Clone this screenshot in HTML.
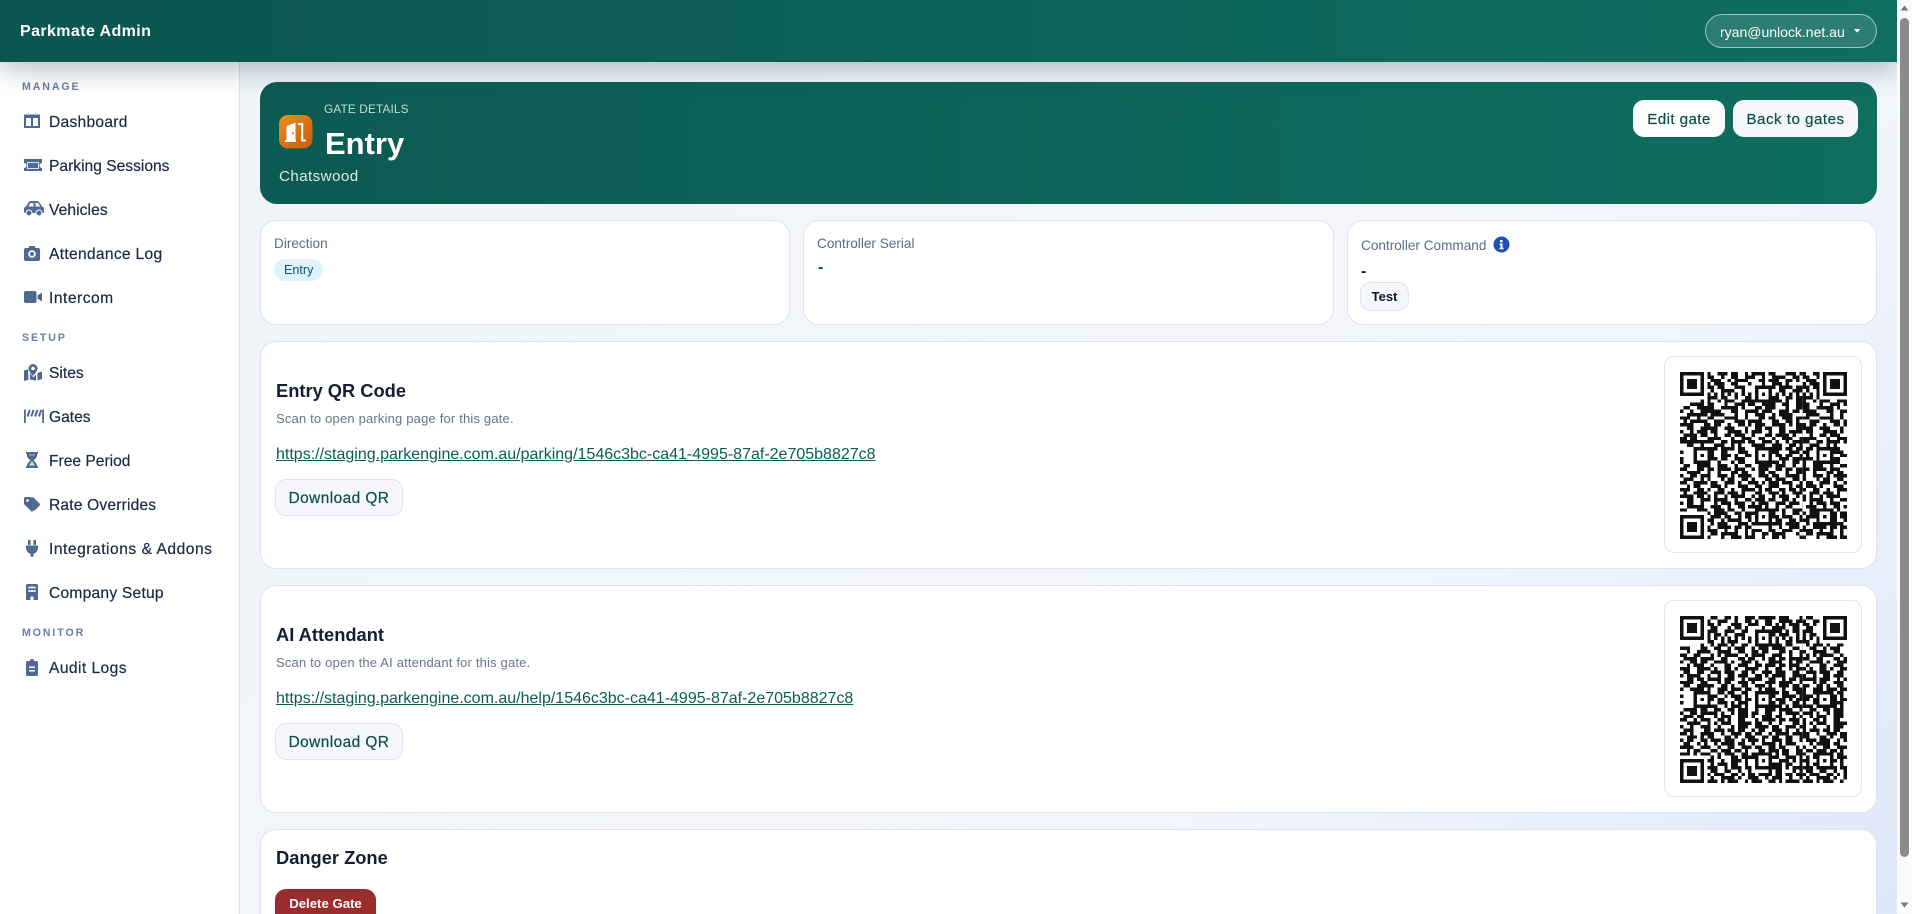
<!DOCTYPE html>
<html lang="en"><head><meta charset="utf-8"><title>Parkmate Admin</title>
<style>
html,body{margin:0;padding:0;width:1912px;height:914px;overflow:hidden}
body{position:relative;font-family:"Liberation Sans",Arial,sans-serif;background:linear-gradient(135deg,#edf4f6 0%,#f4f6fb 55%,#f2f5fc 70%,#dde8fb 100%);color:#1f2a44}
.t{position:absolute;white-space:nowrap;line-height:20px;height:20px}
.side{position:absolute;left:0;top:62px;width:239px;height:852px;background:#fff;border-right:1px solid #dbe0ee}
.head{position:absolute;left:0;top:0;width:1897px;height:62px;background:linear-gradient(90deg,#0a5550 0%,#0f6e60 100%);box-shadow:0 8px 26px rgba(30,70,90,.33);z-index:3}
.nav{left:49px;font-size:15.6px;color:#1d2943;-webkit-text-stroke:.2px #1d2943}
.sec{left:22px;font-size:10.6px;font-weight:700;letter-spacing:1.9px;color:#6b7ca5}
.card{position:absolute;background:#fff;border:1px solid #dfe3f1;border-radius:16px;box-sizing:border-box}
.hero{position:absolute;left:260px;top:82px;width:1617px;height:122px;border-radius:17px;background:linear-gradient(90deg,#0b5a53 0%,#0f6e60 100%)}
.btn{position:absolute;box-sizing:border-box;text-align:center;white-space:nowrap;border-radius:11px}
.dl{left:275px;width:128px;height:37px;line-height:37px;background:#f5f7fc;border:1px solid #dfe3f1;color:#0b4f4a;font-size:15.4px;letter-spacing:.45px;-webkit-text-stroke:.2px #0b4f4a}
.lab{font-size:13.6px;color:#5f6b85}
.h3{font-size:18.3px;font-weight:700;color:#161d33;left:276px}
.sub{font-size:13px;letter-spacing:.18px;color:#68738b;left:276px}
.lnk{font-size:16px;color:#0b5d53;text-decoration:underline;left:276px}
.qrbox{position:absolute;left:1664px;width:198px;height:197px;border:1px solid #dfe5f3;border-radius:10px;box-sizing:border-box;background:#fff}
.qr{position:absolute;left:1680px;width:167px;height:167px}
</style></head><body>

<div class="side"></div>
<div class="head"></div>
<div class="t" style="left:20px;top:22px;font-size:16px;font-weight:700;color:#fff;letter-spacing:.4px;z-index:4">Parkmate Admin</div>
<div style="position:absolute;left:1705px;top:14px;width:172px;height:34px;box-sizing:border-box;border:1px solid rgba(255,255,255,.55);border-radius:17px;background:rgba(255,255,255,.12);z-index:4"></div>
<div class="t" style="left:1720px;top:22px;font-size:14px;color:#fff;z-index:4">ryan@unlock.net.au</div>
<svg style="position:absolute;left:1854px;top:29px;z-index:4" width="7" height="5"><path d="M0 0h6.4L3.2 3.6z" fill="#fff"/></svg>

<div class="t sec" style="top:76.5px">MANAGE</div>
<div class="t nav" style="top:112.5px;letter-spacing:.27px">Dashboard</div>
<div class="t nav" style="top:156.5px">Parking Sessions</div>
<div class="t nav" style="top:200.5px;letter-spacing:.08px">Vehicles</div>
<div class="t nav" style="top:244.5px;letter-spacing:.3px">Attendance Log</div>
<div class="t nav" style="top:288.5px;letter-spacing:.5px">Intercom</div>
<div class="t sec" style="top:327.5px">SETUP</div>
<div class="t nav" style="top:364px">Sites</div>
<div class="t nav" style="top:408px">Gates</div>
<div class="t nav" style="top:451.5px">Free Period</div>
<div class="t nav" style="top:495.5px;letter-spacing:.17px">Rate Overrides</div>
<div class="t nav" style="top:539.5px;letter-spacing:.52px">Integrations &amp; Addons</div>
<div class="t nav" style="top:583.5px;letter-spacing:.23px">Company Setup</div>
<div class="t sec" style="top:622.5px">MONITOR</div>
<div class="t nav" style="top:658.5px;letter-spacing:.43px">Audit Logs</div>

<svg style="position:absolute;left:0;top:0;z-index:2" width="60" height="700" fill="#4f6a92">
<!-- dashboard -->
<path d="M25 115.5h14v11.500h-14zM32 115v12.500" fill="none" stroke="#4f6a92" stroke-width="2"/>
<path d="M25 115h14v3H25z"/>
<!-- ticket -->
<path d="M24 159h18v4a2 2 0 0 0 0 5v3H24v-3a2 2 0 0 0 0-5z"/>
<rect x="27.500" y="162.500" width="11" height="6" fill="#4f6a92" stroke="#dbe3ee"/>
<!-- car -->
<path d="M24 212v-3q0-2 2-2.500l2.500-4q.8-1.500 2.500-1.500h6q1.500 0 2.500 1.500l2.500 4q2 .5 2 2.500v3q0 1-1 1H25q-1 0-1-1z"/>
<path d="M28.500 206.500l1.700-3.200q.3-.3.8-.3h2.500v3.500zM35.500 203h2q.5 0 .8.3l1.900 3.200h-4.700z" fill="#fff"/>
<circle cx="29" cy="213" r="3" stroke="#fff"/><circle cx="39" cy="213" r="3" stroke="#fff"/>
<!-- camera -->
<path d="M24 250q0-2 2-2h2.500l1-2h5l1 2H38q2 0 2 2v9q0 2-2 2H26q-2 0-2-2z"/>
<circle cx="32" cy="254" r="3.800" fill="#fff"/><circle cx="32" cy="254" r="2" />
<!-- video -->
<rect x="24" y="291" width="12.500" height="12" rx="2"/><path d="M37.500 295.500l4.500-3v9l-4.500-3z"/>
<!-- map -->
<path d="M24 370.500l4-1.300.5 10.500-4.500 1.300zM29.800 373l.2 6.500 6 1.300v-6l-2.800 2.500zM37.500 373l4.500-1.500v7.500l-4.500 1.500z"/>
<path d="M33 364a4.500 4.500 0 0 0-4.500 4.500c0 2.500 3 5.800 4.500 7.500 1.500-1.700 4.500-5 4.500-7.500A4.500 4.500 0 0 0 33 364z"/>
<circle cx="33" cy="368.500" r="1.800" fill="#fff"/>
<!-- barrier -->
<path d="M24 409.500h1.800V423H24zM42.200 409.500H44V423h-1.800z"/>
<path d="M27.500 416.500l2.300-6.500M31.300 416.500l2.300-6.500M35.100 416.500l2.300-6.500M38.900 416.500l2.300-6.500" stroke="#4f6a92" stroke-width="2" fill="none"/>
<!-- hourglass -->
<path d="M26 452h12v2h-1v1.500c0 2-2 3.500-3.500 5 1.500 1.500 3.500 3 3.500 5v.5h1v2H26v-2h1v-.5c0-2 2-3.500 3.500-5-1.500-1.500-3.500-3-3.500-5V454h-1z"/>
<path d="M29 454.500h6v.8h-6zM32 461l3 4.500h-6z" fill="#fff" opacity=".75"/>
<!-- tags -->
<path d="M24 498.500q0-1.500 1.500-1.500h5.500l7 7q1 1 0 2l-5 5q-1 1-2 0l-7-7z"/>
<path d="M33 497l6.500 6.500q1 1.200 0 2.300l-5 5 -1-1 5-5-6.800-6.800z"/>
<circle cx="27.500" cy="500.500" r="1.300" fill="#fff"/>
<!-- plug -->
<rect x="28" y="540" width="2.500" height="5"/><rect x="33.500" y="540" width="2.500" height="5"/>
<path d="M26 545.500h12v2.500a6 6 0 0 1-4.500 5.800v3h-3v-3A6 6 0 0 1 26 548z"/>
<!-- building -->
<path d="M27.500 584h9q1.500 0 1.500 1.500V600h-4.500v-3.500h-3V600H26v-14.500q0-1.500 1.500-1.500z"/>
<path d="M28.500 586.500h2v2h-2zM31 586.500h2v2h-2zM33.500 586.500h2v2h-2zM28.500 590h2v2h-2zM31 590h2v2h-2zM33.500 590h2v2h-2z" fill="#fff"/>
<!-- clipboard -->
<path d="M27.500 661H30a2 2 0 0 1 4 0h2.500q1.500 0 1.500 1.500v12q0 1.500-1.500 1.500h-9q-1.500 0-1.500-1.500v-12q0-1.500 1.500-1.500z"/>
<path d="M29 666.500h6v1.500h-6zM29 670h6v1.500h-6z" fill="#fff"/>
</svg>

<!-- hero -->
<div class="hero"></div>
<svg style="position:absolute;left:279px;top:115px" width="34" height="34">
<defs><linearGradient id="og" x1="0" y1="0" x2="1" y2="1"><stop offset="0" stop-color="#f08f1c"/><stop offset="1" stop-color="#c75a0c"/></linearGradient></defs>
<rect width="33.500" height="33.500" rx="9" fill="url(#og)"/>
<path d="M7.500 25.500V11L16.500 7.700V25.500z" fill="#fff"/><circle cx="14" cy="18.300" r="1" fill="#d36a10"/>
<path d="M6 26h11M19 9h4.200v16.500H27" fill="none" stroke="#fff" stroke-width="2"/>
</svg>
<div class="t" style="left:324px;top:99px;font-size:11.800px;letter-spacing:.15px;color:#c8dcd9">GATE DETAILS</div>
<div class="t" style="left:325px;top:134px;font-size:31px;font-weight:700;color:#fff">Entry</div>
<div class="t" style="left:279px;top:167px;font-size:15.200px;letter-spacing:.4px;color:#dceae8">Chatswood</div>
<div class="btn" style="left:1633px;top:100px;width:92px;height:37px;line-height:39px;background:#fff;color:#0b4f4a;font-size:15.200px;letter-spacing:.4px;-webkit-text-stroke:.2px #0b4f4a">Edit gate</div>
<div class="btn" style="left:1733px;top:100px;width:125px;height:37px;line-height:39px;background:#f6f8fc;color:#0b4f4a;font-size:15.200px;letter-spacing:.47px;-webkit-text-stroke:.2px #0b4f4a">Back to gates</div>

<!-- stat cards -->
<div class="card" style="left:260px;top:220px;width:530px;height:105px"></div>
<div class="t lab" style="left:274px;top:234px">Direction</div>
<div style="position:absolute;left:274px;top:259px;width:49px;height:22px;border-radius:11px;background:#e0f3fc"></div>
<div class="t" style="left:284px;top:260px;font-size:12.600px;color:#0b4f80">Entry</div>

<div class="card" style="left:803px;top:220px;width:531px;height:105px"></div>
<div class="t lab" style="left:817px;top:234px">Controller Serial</div>
<div class="t" style="left:818px;top:258px;font-size:16px;font-weight:700;color:#0b3d5a">-</div>

<div class="card" style="left:1347px;top:220px;width:530px;height:105px"></div>
<div class="t lab" style="left:1361px;top:236px">Controller Command</div>
<svg style="position:absolute;left:1493px;top:236px" width="17" height="17"><circle cx="8.500" cy="8.500" r="8" fill="#1f4fb5"/><path d="M7 4h2.600v2.200H7zM6.500 7.500h3.100v4.300h1v1.500H6.500v-1.500h1v-2.800h-1z" fill="#fff"/></svg>
<div class="t" style="left:1361px;top:262px;font-size:16px;font-weight:700;color:#111827">-</div>
<div class="btn" style="left:1360px;top:282px;width:49px;height:29px;line-height:27px;background:#f5f7fc;border:1px solid #dfe3f1;color:#111827;font-size:13px;font-weight:700">Test</div>

<!-- QR card 1 -->
<div class="card" style="left:260px;top:341px;width:1617px;height:228px"></div>
<div class="t h3" style="top:381px">Entry QR Code</div>
<div class="t sub" style="top:409px">Scan to open parking page for this gate.</div>
<div class="t lnk" style="top:445px">https://staging.parkengine.com.au/parking/1546c3bc-ca41-4995-87af-2e705b8827c8</div>
<div class="btn dl" style="top:479px">Download QR</div>
<div class="qrbox" style="top:356px"></div>
<svg class="qr" style="top:371.500px" viewBox="0 0 49 49" shape-rendering="crispEdges">
<g clip-path="url(#c1)"><path id="d1" fill="none" stroke="#111" stroke-width="1" d="
M8 .5h1m2 0h3m1 0h2m2 0h1m1 0h4m1 0h2m3 0h3m1 0h2
M8 1.500h2m2 0h1m2 0h2m2 0h3m2 0h1m2 0h4m2 0h2
M9 2.500h3m2 0h1m1 0h4m3 0h2m1 0h3m2 0h2m1 0h1
M8 3.500h1m1 0h3m2 0h2m3 0h1m3 0h1m2 0h3m1 0h1
M8 4.500h2m1 0h2m3 0h3m7 0h2m1 0h4m1 0h2
M9 5.500h1m2 0h4m2 0h1m7 0h1m2 0h2m2 0h3
M8 7.500h3m1 0h2m2 0h1m2 0h2m6 0h2m2 0h2m1 0h3
M8 8.500h1m2 0h1m1 0h3m2 0h4m5 0h3m1 0h1m2 0h2
M3 9.500h4m1 0h2m3 0h1m2 0h3m1 0h2m2 0h4m2 0h2m2 0h3m2 0h3
M1 10.500h2m2 0h5m2 0h5m1 0h1m3 0h2m1 0h3m3 0h1m2 0h2m1 0h4
M0 11.500h1m2 0h1m2 0h6m3 0h2m2 0h4m1 0h3m2 0h3m1 0h2m2 0h1
M2 12.500h6m1 0h4m3 0h1m2 0h1m2 0h3m2 0h1m1 0h4m3 0h1m1 0h3
M0 13.500h3m2 0h1m2 0h2m3 0h4m2 0h1m3 0h2m1 0h2m2 0h3m1 0h2
M1 14.500h1m1 0h5m2 0h3m3 0h3m1 0h4m3 0h2m2 0h2m1 0h1m2 0h2
M0 15.500h4m3 0h2m1 0h2m2 0h1m2 0h2m1 0h1m1 0h3m2 0h4m1 0h1m1 0h3
M2 16.500h2m2 0h5m2 0h3m3 0h1m2 0h2m1 0h2m2 0h2m3 0h3m2 0h1
M0 17.500h1m2 0h1m1 0h3m1 0h2m3 0h4m1 0h1m1 0h3m2 0h1m2 0h2m1 0h4
M1 18.500h4m2 0h1m2 0h1m2 0h2m1 0h3m2 0h1m3 0h2m1 0h4m1 0h1m2 0h2
M0 19.500h2m1 0h2m3 0h4m3 0h1m2 0h3m2 0h2m2 0h1m2 0h3m2 0h3
M0 20.500h6m1 0h3m2 0h2m1 0h4m1 0h2m2 0h3m1 0h1m2 0h1m1 0h4m1 0h1
M2 21.500h2m2 0h1m3 0h3m2 0h1m1 0h1m3 0h4m2 0h3m2 0h2m1 0h2m1 0h2
M9 22.500h2m1 0h4m1 0h2m8 0h3m1 0h2m1 0h3m6 0h2
M0 23.500h1m7 0h2m2 0h2m3 0h3m7 0h2m3 0h3m1 0h1m7 0h1
M9 24.500h1m2 0h3m1 0h1m2 0h2m7 0h2m1 0h2m2 0h2m1 0h1m6 0h3
M0 25.500h1m7 0h3m1 0h2m2 0h3m7 0h1m2 0h3m1 0h3m8 0h2
M0 26.500h1m7 0h1m2 0h1m3 0h1m1 0h2m7 0h3m1 0h1m2 0h2m1 0h2m6 0h3
M1 27.500h2m2 0h4m2 0h3m2 0h1m2 0h2m2 0h4m1 0h3m2 0h1m2 0h3m1 0h2
M0 28.500h2m3 0h1m2 0h2m1 0h4m1 0h3m2 0h1m1 0h3m2 0h2m1 0h2m1 0h4
M2 29.500h4m2 0h1m2 0h1m3 0h2m1 0h2m3 0h2m1 0h2m3 0h1m2 0h2m2 0h1
M0 30.500h1m2 0h2m1 0h3m2 0h3m1 0h1m1 0h4m2 0h3m1 0h2m2 0h4m1 0h2
M1 31.500h3m2 0h1m1 0h1m3 0h1m1 0h2m2 0h2m1 0h1m3 0h2m1 0h3m2 0h2m1 0h1
M0 32.500h2m2 0h4m1 0h2m2 0h3m1 0h1m2 0h3m1 0h1m1 0h3m1 0h3m2 0h2
M2 33.500h1m1 0h2m3 0h3m1 0h1m3 0h3m2 0h2m2 0h3m3 0h1m1 0h4
M0 34.500h3m2 0h2m1 0h1m2 0h2m2 0h1m2 0h4m1 0h1m1 0h2m2 0h2m1 0h2m1 0h1
M1 35.500h1m2 0h4m2 0h3m1 0h3m1 0h1m3 0h2m2 0h3m1 0h1m2 0h3m1 0h2
M0 36.500h4m1 0h1m2 0h1m1 0h1m2 0h1m1 0h4m2 0h1m1 0h2m2 0h1m1 0h3m2 0h1m1 0h2
M2 37.500h2m2 0h3m1 0h4m2 0h1m2 0h2m1 0h3m1 0h2m2 0h2m1 0h1m2 0h4
M0 38.500h1m1 0h2m2 0h1m3 0h1m1 0h3m1 0h3m2 0h1m1 0h3m2 0h3m1 0h3m1 0h2
M2 39.500h5m2 0h3m2 0h1m2 0h2m1 0h4m1 0h1m2 0h1m2 0h2m3 0h2m2 0h2
M0 40.500h2m3 0h1m1 0h1m2 0h3m1 0h2m2 0h1m3 0h2m1 0h4m1 0h1m2 0h3m1 0h1
M1 41.500h1m1 0h3m2 0h1m1 0h4m2 0h2m1 0h3m2 0h1m1 0h2m2 0h1m2 0h2m1 0h2
M9 42.500h3m1 0h2m2 0h1m1 0h2m5 0h3m1 0h3m2 0h1m5 0h2
M8 43.500h2m2 0h1m1 0h4m2 0h1m5 0h1m1 0h2m2 0h2m1 0h2m5 0h2
M9 44.500h1m1 0h3m3 0h3m1 0h1m5 0h3m1 0h4m2 0h1m5 0h1
M8 45.500h1m2 0h4m1 0h2m1 0h2m5 0h1m2 0h1m2 0h3m2 0h1m5 0h3
M8 46.500h3m2 0h1m2 0h1m2 0h1m1 0h3m2 0h2m2 0h3m2 0h3m1 0h2m1 0h1
M9 47.500h2m1 0h5m2 0h1m1 0h1m2 0h2m1 0h4m3 0h1m1 0h2m3 0h2
M8 48.500h1m3 0h1m2 0h3m1 0h3m2 0h1m2 0h2m1 0h1m4 0h3m1 0h3"/></g>
<g clip-path="url(#c2)"><use href="#d1" x="28"/></g>
<use href="#qo"/>
</svg>

<!-- QR card 2 -->
<div class="card" style="left:260px;top:585px;width:1617px;height:228px"></div>
<div class="t h3" style="top:625px">AI Attendant</div>
<div class="t sub" style="top:653px">Scan to open the AI attendant for this gate.</div>
<div class="t lnk" style="top:689px">https://staging.parkengine.com.au/help/1546c3bc-ca41-4995-87af-2e705b8827c8</div>
<div class="btn dl" style="top:723px">Download QR</div>
<div class="qrbox" style="top:600px"></div>
<svg class="qr" style="top:615.500px" viewBox="0 0 49 49" shape-rendering="crispEdges">
<g clip-path="url(#c1)"><path id="d2" fill="none" stroke="#111" stroke-width="1" d="
M9 .5h2m2 0h2m1 0h1m2 0h3m1 0h5m1 0h3m3 0h1
M8 1.500h1m2 0h3m2 0h1m2 0h2m1 0h1m2 0h2m2 0h4m1 0h2
M8 2.500h2m1 0h1m3 0h3m2 0h3m2 0h2m1 0h1m1 0h1m1 0h3
M9 3.500h2m3 0h1m1 0h2m1 0h1m4 0h1m2 0h4m2 0h2
M8 4.500h3m2 0h3m2 0h2m7 0h3m1 0h1m1 0h2m1 0h1
M8 5.500h1m1 0h2m1 0h1m2 0h3m7 0h2m1 0h3m2 0h1
M8 7.500h2m2 0h1m1 0h3m3 0h1m7 0h1m2 0h2m1 0h4
M9 8.500h1m1 0h3m1 0h1m2 0h2m7 0h3m1 0h2m3 0h2
M0 9.500h3m3 0h2m2 0h2m2 0h1m1 0h3m2 0h1m1 0h3m1 0h4m2 0h2m1 0h2
M2 10.500h1m2 0h4m2 0h4m2 0h2m2 0h2m1 0h2m3 0h2m1 0h1m2 0h4
M0 11.500h2m2 0h2m3 0h1m1 0h1m1 0h4m2 0h1m1 0h4m2 0h3m2 0h1m2 0h3
M1 12.500h4m2 0h3m2 0h2m3 0h2m1 0h2m2 0h1m1 0h2m1 0h2m1 0h4m1 0h1
M0 13.500h1m2 0h2m1 0h2m2 0h4m1 0h1m2 0h3m1 0h1m3 0h4m2 0h1m1 0h2
M2 14.500h1m1 0h3m2 0h1m3 0h2m2 0h3m2 0h2m1 0h3m1 0h2m1 0h3m1 0h2
M0 15.500h3m2 0h4m1 0h1m2 0h2m1 0h1m2 0h4m2 0h1m2 0h2m2 0h1m1 0h4
M1 16.500h2m2 0h1m3 0h3m1 0h3m2 0h2m1 0h1m2 0h3m1 0h3m2 0h2m1 0h1
M0 17.500h1m1 0h4m2 0h1m2 0h1m2 0h2m1 0h3m2 0h2m1 0h1m1 0h4m2 0h3
M2 18.500h2m1 0h1m2 0h4m1 0h3m2 0h1m1 0h4m2 0h2m2 0h1m1 0h2m1 0h2
M0 19.500h4m2 0h2m3 0h1m1 0h2m2 0h3m1 0h1m3 0h3m1 0h4m2 0h1m1 0h1
M1 20.500h2m2 0h1m1 0h3m2 0h2m1 0h1m2 0h2m2 0h3m1 0h1m2 0h3m1 0h2m1 0h2
M0 21.500h1m2 0h4m1 0h1m2 0h3m1 0h3m1 0h2m2 0h1m1 0h3m2 0h1m2 0h3m1 0h1
M8 22.500h1m2 0h2m1 0h2m2 0h2m7 0h2m1 0h2m2 0h3m6 0h3
M0 23.500h1m7 0h3m2 0h1m1 0h3m1 0h1m7 0h1m2 0h4m1 0h2m7 0h1
M8 24.500h2m1 0h2m3 0h2m1 0h2m7 0h3m1 0h1m1 0h2m1 0h1m7 0h2
M0 25.500h1m7 0h1m2 0h3m1 0h1m1 0h3m7 0h1m1 0h2m2 0h2m2 0h1m6 0h3
M8 26.500h3m2 0h1m1 0h3m1 0h1m7 0h3m1 0h1m1 0h3m7 0h2
M1 27.500h4m1 0h2m2 0h2m2 0h2m1 0h3m2 0h1m2 0h3m1 0h4m2 0h1m2 0h2
M0 28.500h1m2 0h2m2 0h4m1 0h1m2 0h1m1 0h3m1 0h2m2 0h2m2 0h1m1 0h4m1 0h1
M1 29.500h3m1 0h2m3 0h1m1 0h3m2 0h3m1 0h1m2 0h3m1 0h2m3 0h1m1 0h3
M0 30.500h2m2 0h1m1 0h3m2 0h2m1 0h1m2 0h2m3 0h1m1 0h4m1 0h2m1 0h3m1 0h2
M2 31.500h4m2 0h1m1 0h1m1 0h3m2 0h4m1 0h2m2 0h1m2 0h1m3 0h2m1 0h2
M0 32.500h1m2 0h1m2 0h3m2 0h1m3 0h1m1 0h3m2 0h4m1 0h2m2 0h3m1 0h3
M1 33.500h3m3 0h2m1 0h3m1 0h2m1 0h2m2 0h1m1 0h2m2 0h3m1 0h1m2 0h1m2 0h2
M0 34.500h2m1 0h1m2 0h4m2 0h1m2 0h3m1 0h2m1 0h2m2 0h1m1 0h4m1 0h3
M2 35.500h3m1 0h1m1 0h2m3 0h2m1 0h1m2 0h3m2 0h2m1 0h2m2 0h2m2 0h1m2 0h1
M0 36.500h1m1 0h2m2 0h2m1 0h3m1 0h3m2 0h1m1 0h3m1 0h1m2 0h3m1 0h2m2 0h2
M1 37.500h2m2 0h1m1 0h1m2 0h1m1 0h4m1 0h2m2 0h1m2 0h4m1 0h1m1 0h3m2 0h1
M0 38.500h4m2 0h3m2 0h1m2 0h2m2 0h3m1 0h2m2 0h2m1 0h2m3 0h1m1 0h2
M2 39.500h1m1 0h2m3 0h2m1 0h3m1 0h2m1 0h1m3 0h2m1 0h3m1 0h2m2 0h3m1 0h1
M0 40.500h3m1 0h1m2 0h2m2 0h1m1 0h3m2 0h2m1 0h1m2 0h2m2 0h1m1 0h2m2 0h4
M1 41.500h2m2 0h3m1 0h1m1 0h1m3 0h2m1 0h4m2 0h1m1 0h3m2 0h3m1 0h1m1 0h1
M8 42.500h2m2 0h1m2 0h3m1 0h1m5 0h2m2 0h3m1 0h1m1 0h1m5 0h3
M9 43.500h1m1 0h3m1 0h2m2 0h1m5 0h1m1 0h3m1 0h2m2 0h1m5 0h2
M8 44.500h3m2 0h1m1 0h3m1 0h2m5 0h4m1 0h1m1 0h3m5 0h1
M9 45.500h2m2 0h2m2 0h1m2 0h1m5 0h1m1 0h2m3 0h1m1 0h2m5 0h2
M8 46.500h1m1 0h3m2 0h2m1 0h1m1 0h2m1 0h4m1 0h2m1 0h2m1 0h3m2 0h3
M9 47.500h1m2 0h4m1 0h1m2 0h3m2 0h1m1 0h3m2 0h1m2 0h3m1 0h1m1 0h2
M8 48.500h3m1 0h1m1 0h3m2 0h1m1 0h3m2 0h2m1 0h1m1 0h4m2 0h1m2 0h3"/></g>
<g clip-path="url(#c2)"><use href="#d2" x="28"/></g>
<use href="#qo"/>
</svg>

<svg width="0" height="0" style="position:absolute"><defs>
<clipPath id="c1"><rect x="0" y="0" width="36" height="49"/></clipPath>
<clipPath id="c2"><rect x="36" y="0" width="13" height="49"/></clipPath>
<g id="qo">
<path d="M0 0h8v8H0zM41 0h8v8h-8zM0 41h8v8H0zM22 4h5v5h-5zM4 22h5v5H4zM22 22h5v5h-5zM40 22h5v5h-5zM22 40h5v5h-5zM40 40h5v5h-5z" fill="#fff"/>
<path fill="#111" fill-rule="evenodd" d="M0 0h7v7H0zM1 1v5h5V1zM2 2h3v3H2zM42 0h7v7h-7zM43 1v5h5V1zM44 2h3v3h-3zM0 42h7v7H0zM1 43v5h5v-5zM2 44h3v3H2z"/>
<path fill="#111" d="M8 6h1v1H8zM10 6h1v1h-1zM12 6h1v1h-1zM14 6h1v1h-1zM16 6h1v1h-1zM18 6h1v1h-1zM20 6h1v1h-1zM28 6h1v1h-1zM30 6h1v1h-1zM32 6h1v1h-1zM34 6h1v1h-1zM36 6h1v1h-1zM38 6h1v1h-1zM40 6h1v1h-1zM6 8h1v1H6zM6 10h1v1H6zM6 12h1v1H6zM6 14h1v1H6zM6 16h1v1H6zM6 18h1v1H6zM6 20h1v1H6zM6 28h1v1H6zM6 30h1v1H6zM6 32h1v1H6zM6 34h1v1H6zM6 36h1v1H6zM6 38h1v1H6zM6 40h1v1H6z"/>
<g fill-rule="evenodd" fill="#111">
<path d="M22 4h5v5h-5zM23 5v3h3V5zM24 6h1v1h-1z"/>
<path d="M4 22h5v5H4zM5 23v3h3v-3zM6 24h1v1H6z"/>
<path d="M22 22h5v5h-5zM23 23v3h3v-3zM24 24h1v1h-1z"/>
<path d="M40 22h5v5h-5zM41 23v3h3v-3zM42 24h1v1h-1z"/>
<path d="M22 40h5v5h-5zM23 41v3h3v-3zM24 42h1v1h-1z"/>
<path d="M40 40h5v5h-5zM41 41v3h3v-3zM42 42h1v1h-1z"/>
</g>
</g></defs></svg>

<!-- danger -->
<div class="card" style="left:260px;top:829px;width:1617px;height:110px"></div>
<div class="t h3" style="top:848px">Danger Zone</div>
<div class="btn" style="left:275px;top:889px;width:101px;height:40px;line-height:29px;background:#9b2c2c;color:#fff;font-size:13.200px;font-weight:700">Delete Gate</div>

<!-- scrollbar -->
<div style="position:absolute;left:1897px;top:0;width:15px;height:914px;background:#fbfbfb;z-index:5"></div>
<div style="position:absolute;left:1900px;top:18px;width:9px;height:839px;background:#8b8b8b;border-radius:5px;z-index:6"></div>
<svg style="position:absolute;left:1897px;top:0;z-index:6" width="15" height="914" fill="#777"><path d="M7.500 5.500l4 5h-8zM3.500 902.500h8l-4 5z"/></svg>
</body></html>
